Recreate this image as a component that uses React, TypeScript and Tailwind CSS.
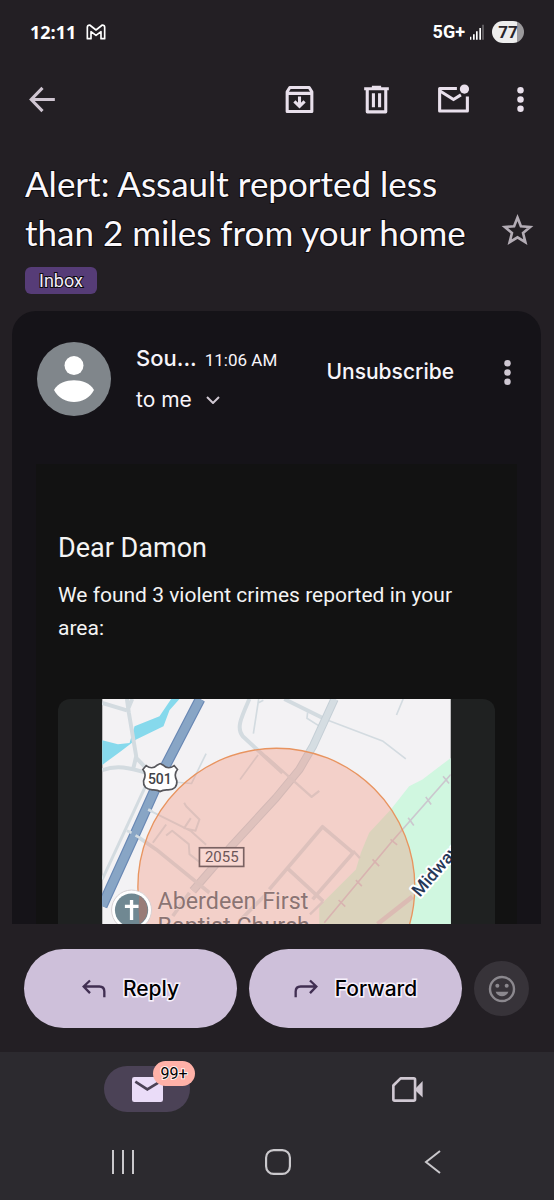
import type { ReactNode } from "react";

const darkEdge = "[-webkit-text-stroke:2px_#0c0a0d] [paint-order:stroke_fill]";
const lightEdge = "[-webkit-text-stroke:3px_#f7f1fc] [paint-order:stroke_fill]";

function Icon({ children, className = "size-[37px]" }: { children: ReactNode; className?: string }) {
  return (
    <svg viewBox="0 0 24 24" fill="none" stroke="currentColor" strokeWidth="2" className={`shrink-0 ${className}`} aria-hidden="true">
      {children}
    </svg>
  );
}

function Dots() {
  return (
    <Icon>
      <g fill="currentColor" stroke="none">
        <circle cx="12" cy="6" r="2.1" />
        <circle cx="12" cy="12" r="2.1" />
        <circle cx="12" cy="18" r="2.1" />
      </g>
    </Icon>
  );
}

function StatusBar() {
  return (
    <div className="flex h-16 shrink-0 items-center justify-between pr-[30px] pl-[30px] text-white">
      <div className="flex items-center gap-[10px]">
        <span className="font-['Open_Sans',sans-serif] text-lg leading-6 font-bold">12:11</span>
        <svg viewBox="0 0 60 48" className="h-4 w-5" fill="none" stroke="currentColor" strokeWidth="5" strokeLinejoin="round" aria-label="Gmail">
          <path d="M4 44V10Q4 3 11 3L30 18 49 3Q56 3 56 10V44H45V23L30 34 15 23V44Z" />
        </svg>
      </div>
      <div className="flex items-center gap-[5px]">
        <span className="font-[Roboto,sans-serif] text-lg leading-6 font-bold">5G+</span>
        <svg viewBox="0 0 42 48" className="h-4 w-[14px]" fill="currentColor" aria-label="Signal">
          <path d="M0 38h4v9H0zM9 31h5v16H9zM18 22h5v25h-5zM28 12h5v35h-5z" />
          <path d="M37 2h4v45h-4z" opacity=".4" />
        </svg>
        <span className="ml-[3px] flex h-[22px] w-8 items-center justify-center rounded-full bg-linear-to-r from-[#ededed] from-77% to-[#9b999c] to-77% font-[Roboto,sans-serif] text-[17px] leading-5 font-bold text-[#29252a]">
          77
        </span>
      </div>
    </div>
  );
}

function Toolbar() {
  return (
    <div className="flex h-[71px] shrink-0 items-center pr-[15px] pl-6 text-[#e9e0ec]">
      <button aria-label="Back" className="mr-auto text-[#cfc5d1]">
        <Icon>
          <path d="M20 12H5M12 4.5 4.7 12 12 19.5" />
        </Icon>
      </button>
      <div className="flex items-center gap-10">
        <button aria-label="Archive">
          <Icon>
            <path d="M4 7 5.7 4.2H18.3L20 7V19.8H4ZM4 8H20" strokeLinejoin="round" />
            <path d="M12 10v6.2M8.7 13.2 12 16.5l3.3-3.3" />
          </Icon>
        </button>
        <button aria-label="Delete">
          <Icon>
            <path d="M4 5H20M9 4H15" />
            <path d="M6 5V20H18V5" strokeLinejoin="round" />
            <path d="M10 8v9M14 8v9" />
          </Icon>
        </button>
        <button aria-label="Mark as unread">
          <Icon>
            <path d="M14.2 4.9H3V19.5H21V10" strokeLinejoin="round" />
            <path d="M3 6.3 12 12 16.8 9" />
            <circle cx="19.1" cy="5.2" r="3" fill="currentColor" stroke="none" />
          </Icon>
        </button>
      </div>
      <button aria-label="More options" className="ml-[30px]">
        <Dots />
      </button>
    </div>
  );
}

function Subject() {
  return (
    <div className="shrink-0 pt-6 pb-[17px] pl-[25px]">
      <div className="flex items-end pr-[18px]">
        <h1 className={`flex-1 font-[Lato,sans-serif] text-[35px] leading-[49px] text-[#fbf8fc] ${darkEdge}`}>
          Alert: Assault reported less <br />
          than 2 miles from your home
        </h1>
        <button aria-label="Star" className="mb-2 text-[#b3acb5]">
          <Icon>
            <path
              d="M12 3.6 14.2 9.2 20.2 9.7 15.6 13.6 17.1 19.6 12 16.4 6.9 19.6 8.4 13.6 3.8 9.7 9.8 9.2Z"
              strokeWidth="1.7"
            />
          </Icon>
        </button>
      </div>
      <span className={`mt-[10px] flex h-[27px] w-[72px] items-center justify-center rounded-md bg-[#563c77] font-[Roboto,sans-serif] text-lg text-[#f3ecfa] ${darkEdge}`}>
        Inbox
      </span>
    </div>
  );
}

function SenderRow() {
  return (
    <div className="flex pr-[15px] pl-[25px] text-[#f8f5fa]">
      <svg viewBox="0 0 74 74" className="size-[74px] shrink-0" aria-label="Sender">
        <circle cx="37" cy="37" r="37" fill="#80868b" />
        <circle cx="37" cy="23.5" r="9.5" fill="#fff" />
        <path d="M17 48C21 41 29 38.3 37 38.3S53 41 57 48C53 56 45 60 37 60S21 56 17 48Z" fill="#fff" />
      </svg>
      <div className="ml-[25px] font-[Inter,sans-serif]">
        <div className="flex h-8 items-baseline gap-2">
          <span className="text-[22px] leading-8 font-medium">Sou...</span>
          <span className="font-[Roboto,sans-serif] text-[17px] leading-8">11:06 AM</span>
        </div>
        <button className="mt-2 flex items-center gap-[14px] text-[21px] leading-9">
          to me
          <svg viewBox="0 0 14 8" className="h-2 w-[14px]" fill="none" stroke="#d0c8d2" strokeWidth="2" aria-hidden="true">
            <path d="M1 1 7 7 13 1" />
          </svg>
        </button>
      </div>
      <button className="mt-4 ml-auto h-7 font-[Inter,sans-serif] text-[21px] leading-7 font-medium">Unsubscribe</button>
      <button aria-label="Message options" className="mt-3 ml-[35px] h-[37px] text-[#cfc8d2]">
        <Dots />
      </button>
    </div>
  );
}

function CrimeMap() {
  return (
    <svg viewBox="38 28 1047 676" className="h-[225px] w-[349px] shrink-0 font-[Roboto,sans-serif]" aria-label="Map of reported crimes">
      <rect x="38" y="28" width="1047" height="676" fill="#f3f2f4" />
      <path d="M1085 205 1000 270 960 290 905 360 840 430 815 490 800 540 690 650 690 704H1085Z" fill="#d0f7e0" />
      <path d="M38 152 85 164 120 160 135 110 210 80 245 28H270L240 62 222 110 140 150 95 184 38 226Z" fill="#86d9ec" />
      <g fill="none" stroke="#d3dbe0" strokeLinejoin="round">
        <path d="M38 40 112 62M112 28 118 70 140 200 132 234M128 28 112 66M38 242C80 225 120 234 170 250M140 205 172 238" strokeWidth="12" />
        <path d="M480 28C455 85 440 115 460 140L580 250M585 28 702 86" strokeWidth="12" />
        <path d="M350 192 306 282 262 278M506 196 452 270M508 28 492 132M506 40 522 32M700 86 880 154 950 208M655 68 653 86 688 108M942 28 922 76" strokeWidth="5" />
        <path d="M736 28 672 168 630 240 560 325 430 466 310 604" strokeWidth="25" stroke="#c5cfd6" />
        <path d="M736 28 672 168 630 240 560 325 430 466 310 604" strokeWidth="19" stroke="#d5dde2" />
        <path d="M168 290 38 570" strokeWidth="9" />
        <path d="M178 362 305 425 350 466M284 340 290 350 330 390 318 424 284 416 304 386M190 460 230 405M230 438 248 424 298 464 300 494 330 518" strokeWidth="6" />
        <path d="M142 440 200 480 360 610M540 600 700 412 792 490 670 630M594 536 702 636M535 610 450 695M300 610 250 680" strokeWidth="11" />
        <path d="M530 200 667 322 690 304M792 484 812 506M702 636 662 675" strokeWidth="7" />
      </g>
      <path d="M332 28 230 225 138 430 38 650" fill="none" stroke="#6988b4" strokeWidth="32" />
      <path d="M332 28 230 225 138 430 38 650" fill="none" stroke="#88a5c5" strokeWidth="25" />
      <path d="M112 424 126 430M138 438 152 446M176 360 188 366" stroke="#d5dde2" strokeWidth="8" />
      <g fill="none" stroke="#cbc7ce" strokeWidth="5">
        <path d="M1085 255 905 460 705 700" />
        <path d="M1062 260 1080 282M1010 322 1026 345M957 385 974 408M904 450 924 466M850 510 870 530M800 572 818 590M748 632 768 652" />
        <path d="M865 704 970 622" stroke="#cfd3d3" strokeWidth="14" />
      </g>
      <circle cx="561" cy="592" r="416" fill="#f28c73" fillOpacity=".33" stroke="#e8945f" strokeWidth="4" />
      <path d="M170 228Q188 242 204 226L212 222 220 226Q236 242 254 228L264 240Q252 254 262 274 264 300 236 301 220 300 212 306 204 300 188 301 160 298 162 274 172 254 160 240Z" fill="#fff" stroke="#56565b" strokeWidth="5" />
      <text x="211" y="284" textAnchor="middle" fontSize="42" fontWeight="500" fill="#424347">501</text>
      <rect x="330" y="475" width="133" height="56" fill="#f8d8d2" stroke="#7a6262" strokeWidth="5" />
      <text x="397" y="519" textAnchor="middle" fontSize="45" fill="#6b5558">2055</text>
      <circle cx="126" cy="662" r="60" fill="#fff" stroke="#d7d1d3" strokeWidth="3" />
      <circle cx="126" cy="662" r="50" fill="#708892" />
      <path d="M149 618A416 416 0 0 0 150 704 50 50 0 0 0 149 618Z" fill="#987c78" />
      <path d="M126 632V692M106 651H147" stroke="#fff" strokeWidth="10" fill="none" />
      <g fontSize="70" fill="#8b7473" stroke="#f6d6d0" strokeWidth="4" paintOrder="stroke">
        <text x="204" y="660">Aberdeen First</text>
        <text x="204" y="733">Baptist Church</text>
      </g>
      <text
        transform="translate(992 625) rotate(-49)"
        fontSize="53"
        fontWeight="500"
        fill="#263858"
        stroke="#fff"
        strokeWidth="12"
        strokeLinejoin="round"
        paintOrder="stroke"
      >
        Midway
      </text>
    </svg>
  );
}

function Message() {
  return (
    <main className="mr-[13px] ml-3 flex min-h-0 flex-1 flex-col overflow-hidden rounded-t-[24px] bg-[#151318] pt-[31px]">
      <SenderRow />
      <article className="mx-6 mt-[46px] flex-1 bg-[#121212] px-[22px] pt-[66px] font-[Roboto,sans-serif] text-[#f4f4f4]">
        <h2 className="text-[27px] leading-9">Dear Damon</h2>
        <p className="mt-[13px] text-[21px] leading-[33px]">We found 3 violent crimes reported in your area:</p>
        <div className="mt-[54px] flex justify-center overflow-hidden rounded-t-xl bg-[#1f2121]">
          <CrimeMap />
        </div>
      </article>
    </main>
  );
}

function ReplyBar() {
  const pill = "flex h-[79px] flex-1 items-center justify-center gap-[17px] rounded-full bg-[#cec0da] font-[Inter,sans-serif] text-[21px] font-medium text-black";
  return (
    <div className="flex shrink-0 items-center gap-3 pt-[25px] pr-[25px] pb-6 pl-6">
      <button className={pill}>
        <svg viewBox="0 0 72 56" className="h-[19px] w-6" fill="none" stroke="#412f52" strokeWidth="7" aria-hidden="true">
          <path d="M24 4 5 22 24 42M5 22H52Q67 22 67 37V54" />
        </svg>
        <span className={lightEdge}>Reply</span>
      </button>
      <button className={pill}>
        <svg viewBox="0 0 72 56" className="h-[19px] w-6" fill="none" stroke="#412f52" strokeWidth="7" aria-hidden="true">
          <path d="M48 4 67 22 48 42M67 22H20Q5 22 5 37V54" />
        </svg>
        <span className={lightEdge}>Forward</span>
      </button>
      <button aria-label="Add reaction" className="flex size-[55px] items-center justify-center rounded-full bg-[#373339] text-[#8b888e]">
        <Icon className="size-8">
          <circle cx="12" cy="12" r="9" strokeWidth="1.8" />
          <g fill="currentColor" stroke="none">
            <circle cx="8.5" cy="9.5" r="1.5" />
            <circle cx="15.5" cy="9.5" r="1.5" />
            <path d="M7.2 14H16.8C16 16.2 14.2 17.4 12 17.4S8 16.2 7.2 14Z" />
          </g>
        </Icon>
      </button>
    </div>
  );
}

function BottomNav() {
  return (
    <footer className="shrink-0 bg-[#2c2a2f]">
      <nav className="flex h-[72px] px-[17px] pt-[14px]">
        <div className="flex flex-1 justify-center">
          <button aria-label="Mail" className="relative flex h-[46px] w-[86px] items-center justify-center rounded-full bg-[#4b4256]">
            <svg viewBox="0 0 93 75" className="h-[25px] w-[31px]" aria-hidden="true">
              <rect width="93" height="75" rx="7" fill="#eadcf8" />
              <path d="M10 14 46 37 84 14" fill="none" stroke="#4b4256" strokeWidth="8" />
            </svg>
            <span className="absolute -top-[5px] left-[49px] flex h-[25px] w-[42px] items-center justify-center rounded-full bg-[#ffb1a8] font-[Roboto,sans-serif] text-base text-black [-webkit-text-stroke:2px_#fff0ee] [paint-order:stroke_fill]">
              99+
            </span>
          </button>
        </div>
        <div className="flex flex-1 justify-center">
          <button aria-label="Meet" className="flex h-[46px] w-[86px] items-center justify-center">
            <svg viewBox="0 0 94 76" className="h-[25px] w-[31px]" aria-hidden="true">
              <path d="M26 4H66Q70 4 70 8V68Q70 72 66 72H8Q4 72 4 68V26Z" fill="none" stroke="#d0c8d2" strokeWidth="8" strokeLinejoin="round" />
              <path d="M72 34 93 12V62L72 42Z" fill="#d0c8d2" />
            </svg>
          </button>
        </div>
      </nav>
      <div className="grid h-[76px] grid-cols-3 pr-[44px] pl-[46px] text-[#cac8cc]">
        <button aria-label="Recent apps" className="flex items-center justify-center">
          <Icon className="size-6">
            <path d="M2 0V24M12 0V24M22 0V24" />
          </Icon>
        </button>
        <button aria-label="Home" className="flex items-center justify-center">
          <Icon className="size-[26px]">
            <rect x="1" y="1" width="22" height="22" rx="7" />
          </Icon>
        </button>
        <button aria-label="Navigate back" className="flex items-center justify-center">
          <Icon className="size-6">
            <path d="M19 1 5 12 19 23" />
          </Icon>
        </button>
      </div>
    </footer>
  );
}

export default function App() {
  return (
    <div className="flex h-screen flex-col overflow-hidden bg-[#231f24]">
      <StatusBar />
      <Toolbar />
      <Subject />
      <Message />
      <ReplyBar />
      <BottomNav />
    </div>
  );
}
